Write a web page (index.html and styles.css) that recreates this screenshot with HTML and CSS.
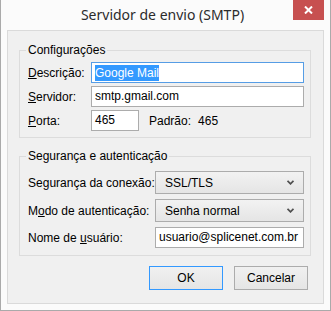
FILE: index.html
```html
<!DOCTYPE html>
<html lang="pt">
  <head>
    <meta charset="utf-8" />
    <title>Servidor de envio (SMTP)</title>
    <link rel="stylesheet" href="styles.css">
  </head>
  <body>
    <div class="window">
      <div class="titlebar">
        <span></span>
        <h1 class="title">Servidor de envio (SMTP)</h1>
        <button class="close" type="button" aria-label="Fechar">
          <svg width="9" height="8" viewBox="0 0 9 8">
            <path d="M1 0.5 L8 7.5 M8 0.5 L1 7.5" stroke="#fff" stroke-width="2" fill="none" />
          </svg>
        </button>
      </div>

      <div class="client">
        <fieldset class="group group-server">
          <legend>Configurações</legend>
          <div class="form form-server">
            <label><u>D</u>escrição:</label>
            <div class="field focused"><span class="selected">Google Mail</span></div>

            <label><u>S</u>ervidor:</label>
            <div class="field">smtp.gmail.com</div>

            <label><u>P</u>orta:</label>
            <div class="port-row">
              <div class="field port">465</div>
              <span class="default-label">Padrão:</span>
              <span>465</span>
            </div>
          </div>
        </fieldset>

        <fieldset class="group group-auth">
          <legend>Segurança e autenticação</legend>
          <div class="form form-auth">
            <label>Se<u>g</u>urança da conexão:</label>
            <div class="select">
              <span>SSL/TLS</span>
              <svg class="chevron" width="7" height="5" viewBox="0 0 7 5">
                <path d="M0.5 0.8 L3.5 3.8 L6.5 0.8" stroke="#505050" stroke-width="1.8" fill="none" />
              </svg>
            </div>

            <label>M<u>o</u>do de autenticação:</label>
            <div class="select">
              <span>Senha normal</span>
              <svg class="chevron" width="7" height="5" viewBox="0 0 7 5">
                <path d="M0.5 0.8 L3.5 3.8 L6.5 0.8" stroke="#505050" stroke-width="1.8" fill="none" />
              </svg>
            </div>

            <label>Nome de <u>u</u>suário:</label>
            <div class="field">usuario@splicenet.com.br</div>
          </div>
        </fieldset>

        <div class="buttons">
          <button class="btn btn-default" type="button">OK</button>
          <button class="btn" type="button">Cancelar</button>
        </div>
      </div>
    </div>
  </body>
</html>
```

FILE: styles.css
```css
body {
  margin: 0;
  font-family: "Liberation Sans", Arial, sans-serif;
  font-size: 12px;
  color: #000;
}

.window {
  box-sizing: border-box;
  width: 331px;
  height: 311px;
  display: flex;
  flex-direction: column;
  background-color: #fbfbfb;
  border: 1px solid #aaaaaa;
  border-top: none;
}

.titlebar {
  display: grid;
  grid-template-columns: 1fr auto 1fr;
  height: 30px;
  padding-right: 6px;
}

.title {
  margin: 0;
  font-family: "Noto Sans", sans-serif;
  font-size: 14px;
  font-weight: normal;
  line-height: 29px;
  color: #2b2b2b;
  white-space: nowrap;
}

.close {
  justify-self: end;
  align-self: start;
  display: flex;
  align-items: center;
  justify-content: center;
  width: 31px;
  height: 20px;
  padding: 0;
  border: none;
  background-color: #c75050;
}

.client {
  flex: 1;
  margin: 0 6px 6px;
  border: 1px solid #dadada;
  background-color: #f0f0f0;
  display: flex;
  flex-direction: column;
}

.group {
  margin: 0 12px 0 11px;
  padding: 0 6px 6px 8px;
  border: 1px solid #dcdcdc;
}

.group legend {
  margin-left: -2px;
  padding: 0 2px;
  line-height: 15px;
}

.group-server {
  margin-top: 12px;
  padding-top: 4px;
}

.group-auth {
  margin-top: 11px;
  padding-top: 7px;
  padding-bottom: 7px;
}

.form {
  display: grid;
  align-items: center;
}

.form-server {
  grid-template-columns: 63px 1fr;
  row-gap: 3px;
}

.form-auth {
  grid-template-columns: 127px 1fr;
  row-gap: 5px;
}

label {
  white-space: nowrap;
}

.field {
  box-sizing: border-box;
  height: 21px;
  padding-left: 3px;
  line-height: 19px;
  background-color: #fff;
  border: 1px solid #acacac;
  white-space: nowrap;
  overflow: hidden;
}

.field.focused {
  border-color: #569de5;
}

.selected {
  display: inline-block;
  line-height: 16px;
  vertical-align: middle;
  color: #fff;
  background-color: #3399ff;
}

.port-row {
  display: flex;
  align-items: center;
}

.field.port {
  width: 48px;
}

.default-label {
  margin: 0 7px 0 10px;
}

.select {
  box-sizing: border-box;
  height: 23px;
  display: flex;
  align-items: center;
  justify-content: space-between;
  padding: 0 9px 0 9px;
  border: 1px solid #acacac;
  background: linear-gradient(#f2f2f2, #e5e5e5);
}

.buttons {
  display: flex;
  justify-content: flex-end;
  gap: 11px;
  margin-top: 10px;
  padding-right: 15px;
}

.btn {
  box-sizing: border-box;
  width: 74px;
  height: 24px;
  padding: 0;
  font-family: inherit;
  font-size: 12px;
  color: #000;
  border: 1px solid #acacac;
  background: linear-gradient(#f0f0f0, #e5e5e5);
}

.btn-default {
  border-color: #3399ff;
}
```
